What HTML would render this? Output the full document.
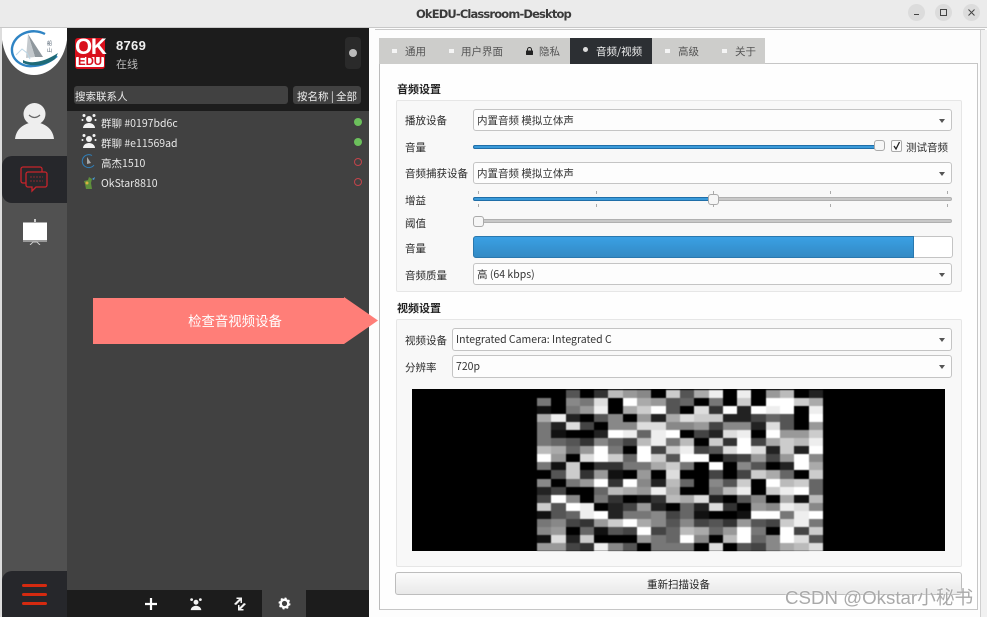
<!DOCTYPE html>
<html lang="zh"><head><meta charset="utf-8"><title>OkEDU-Classroom-Desktop</title>
<style>
html,body{margin:0;padding:0;width:987px;height:617px;overflow:hidden;background:#fff}
body{position:relative;font-family:"Liberation Sans","Noto Sans CJK SC",sans-serif;font-size:10.5px;color:#222}
.a,.t{position:absolute}
.t{white-space:nowrap;line-height:16px;margin-top:1px;font-family:"Noto Sans CJK SC","Liberation Sans",sans-serif}
.l{font-size:10.5px;color:#2a2a2a}
.c{position:absolute;box-sizing:border-box;background:#fdfdfd;border:1px solid #c4c4c4;border-radius:3px;font:10.5px/22px "Noto Sans CJK SC",sans-serif;padding-left:3px;color:#333;white-space:nowrap}
.c:after{content:"";position:absolute;right:6px;top:9px;border:3.5px solid transparent;border-top:4px solid #555;border-bottom:0}
.gb{position:absolute;box-sizing:border-box;background:#f8f8f8;border:1px solid #e6e6e6;border-radius:2px}
.h{font-weight:bold;font-size:11px;color:#222;margin-top:0}
.tr{position:absolute;height:4px;border-radius:2px;background:#c8c8c8;border:1px solid #b0b0b0;box-sizing:border-box}
.tb{position:absolute;height:4px;border-radius:2px 0 0 2px;background:#3a9ad9;border:1px solid #1f6ea8;box-sizing:border-box}
.hd{position:absolute;width:11px;height:11px;box-sizing:border-box;background:#f6f6f6;border:1px solid #aaa;border-radius:3px}
.tick{position:absolute;width:1px;height:3px;background:#aaa}
.tab{position:absolute;top:38px;height:25px;line-height:28px;font-family:"Noto Sans CJK SC",sans-serif;font-size:10.5px;color:#555;white-space:nowrap}
.sq{position:absolute;top:11px;width:5px;height:4px;background:#f5f5f5}
.li{color:#e8e8e8;font-size:10.5px}
.dot{position:absolute;left:354px;width:8px;height:8px;border-radius:50%;box-sizing:border-box}
.wb{position:absolute;top:4px;width:17px;height:17px;border-radius:50%;background:#dcdcdc}
table{position:absolute;left:537px;top:390px;width:286px;height:161px;border-collapse:collapse;table-layout:fixed;filter:blur(.6px)}
td{padding:0;height:8.05px}
.z0{background:#000}.z1{background:#111}.z2{background:#222}.z3{background:#333}.z4{background:#444}.z5{background:#555}.z6{background:#666}.z7{background:#777}.z8{background:#888}.z9{background:#999}.za{background:#aaa}.zb{background:#bbb}.zc{background:#ccc}.zd{background:#ddd}.ze{background:#eee}.zf{background:#fff}
</style></head><body>

<!-- title bar -->
<div class="a" style="left:0;top:0;width:987px;height:28px;background:#ebebeb;border-bottom:1px solid #c8c8c8;box-sizing:border-box"></div>
<div class="a" style="left:416px;top:6px;font:bold 11.5px/16px 'DejaVu Sans','Liberation Sans',sans-serif;color:#3a3a3a;white-space:nowrap;letter-spacing:-.85px">OkEDU-Classroom-Desktop</div>
<div class="wb" style="left:908px"></div><div class="wb" style="left:935px"></div><div class="wb" style="left:963px"></div>
<div class="a" style="left:914px;top:14px;width:5px;height:1px;background:#444"></div>
<div class="a" style="left:940px;top:9px;width:7px;height:7px;box-sizing:border-box;border:1px solid #444"></div>
<svg class="a" style="left:967px;top:8px" width="9" height="9"><path d="M1.5 1.5l6 6M7.5 1.5l-6 6" stroke="#444" stroke-width="1"/></svg>

<!-- left rail -->
<div class="a" style="left:0;top:28px;width:2px;height:589px;background:#ddd"></div>
<div class="a" style="left:2px;top:28px;width:65px;height:589px;background:#515151"></div>
<svg class="a" style="left:2px;top:28px" width="65" height="48" viewBox="0 0 65 48">
<path d="M0 0H65V12C62 33 48 47 32 47C16 47 3 33 0 12Z" fill="#fff"/>
<path d="M43 6C30 -1 12 6 10 20C9 32 20 39 30 38C40 38 48 34 55 28" fill="none" stroke="#2f84c4" stroke-width="2.4"/>
<path d="M26 6L41 29L33 29Z" fill="#8f979d"/>
<path d="M26 6L33 29L24 30Z" fill="#c4c9cd"/>
<path d="M14 27l6-6 5 4 3 6" fill="none" stroke="#bcd6e6" stroke-width="1"/>
<path d="M21 32C30 37 44 33 56 25L53 31C44 38 30 39 21 35Z" fill="#1f6b78"/>
<text x="45" y="17" font-size="5" fill="#456" font-family="Noto Sans CJK SC">船</text><text x="45" y="24" font-size="5" fill="#456" font-family="Noto Sans CJK SC">山</text>
</svg>
<svg class="a" style="left:14px;top:100px" width="42" height="40" viewBox="0 0 42 40">
<circle cx="20.500" cy="14" r="11" fill="#eee"/>
<path d="M1 39C2 30 8 25 15 23H26C33 25 39 30 40 39Z" fill="#eee"/>
<path d="M15 15q5.500 5 11 0" fill="none" stroke="#666" stroke-width="1.200"/>
</svg>
<div class="a" style="left:2px;top:156px;width:65px;height:47px;background:#26272b;border-radius:10px 0 0 10px"></div>
<svg class="a" style="left:19px;top:164px" width="30" height="30" viewBox="0 0 30 30" fill="none" stroke="#c8242b" stroke-width="1.300">
<path d="M7 19H4a2 2 0 0 1-2-2V5a2 2 0 0 1 2-2h17a2 2 0 0 1 2 2v3"/>
<path d="M9 8H26a2 2 0 0 1 2 2V21a2 2 0 0 1-2 2H17l-4 4v-4H9a2 2 0 0 1-2-2V10a2 2 0 0 1 2-2Z" fill="#26272b"/>
<path d="M11 13h13M11 17h13" stroke-dasharray="2 1" stroke-width="1" stroke="#8c2a2f"/>
</svg>
<div class="a" style="left:34px;top:219px;width:2px;height:3px;background:#ccc"></div>
<div class="a" style="left:23px;top:222px;width:24px;height:18px;background:#fff;box-sizing:border-box;border:1px solid #aaa;border-width:1px 0 0"></div>
<div class="a" style="left:23px;top:240px;width:24px;height:2px;background:#999"></div>
<svg class="a" style="left:29px;top:241px" width="12" height="4"><path d="M1 4l3-3h4l3 3" fill="none" stroke="#ccc"/></svg>
<div class="a" style="left:2px;top:571px;width:65px;height:46px;background:#26272b;border-radius:10px 0 0 0"></div>
<div class="a" style="left:22px;top:584px;width:25px;height:3px;border-radius:2px;background:#d42a10"></div>
<div class="a" style="left:22px;top:593px;width:25px;height:3px;border-radius:2px;background:#d42a10"></div>
<div class="a" style="left:22px;top:602px;width:25px;height:3px;border-radius:2px;background:#d42a10"></div>

<!-- contact panel -->
<div class="a" style="left:67px;top:28px;width:302px;height:83px;background:#1c1c1c"></div>
<div class="a" style="left:67px;top:111px;width:302px;height:479px;background:#414141"></div>
<div class="a" style="left:67px;top:590px;width:302px;height:27px;background:#1c1c1c"></div>
<div class="a" style="left:262px;top:590px;width:44px;height:27px;background:#414141"></div>
<div class="a" style="left:75px;top:38px;width:30px;height:31px;background:#d9101c;border-radius:3px"></div>
<div class="a" style="left:75px;top:35px;width:30px;text-align:center;font:bold 22px/24px 'Liberation Sans',sans-serif;color:#fff;letter-spacing:-1.2px">OK</div>
<div class="a" style="left:76px;top:57px;width:28px;height:10px;background:#fff;border-radius:1px"></div>
<div class="a" style="left:75px;top:56px;width:30px;text-align:center;font:bold 11.5px/12px 'Liberation Sans',sans-serif;color:#d9101c;letter-spacing:-.1px">EDU</div>
<div class="a" style="left:116px;top:38px;font:bold 13px/16px 'Liberation Sans',sans-serif;color:#f0f0f0;letter-spacing:.3px">8769</div>
<div class="t" style="left:116px;top:56px;margin-top:0;font-size:11px;color:#bbb">在线</div>
<div class="a" style="left:345px;top:37px;width:16px;height:32px;background:#2a2a2a;border-radius:4px"></div>
<div class="a" style="left:349px;top:49px;width:8px;height:8px;border-radius:50%;background:#bbb"></div>
<div class="a" style="left:74px;top:86px;width:214px;height:18px;background:#414141;border-radius:3px"></div>
<div class="t" style="left:75px;top:88px;font-size:10.5px;color:#eee">搜索联系人</div>
<div class="a" style="left:293px;top:86px;width:68px;height:18px;background:#414141;border-radius:3px"></div>
<div class="t" style="left:297px;top:88px;font-size:10.5px;color:#eee">按名称 | 全部</div>

<svg class="a" style="left:81px;top:113px" width="16" height="16" viewBox="0 0 16 16" fill="#f2f2f2"><circle cx="8" cy="6" r="3"/><circle cx="3" cy="2.500" r="1.500"/><circle cx="13" cy="2.500" r="1.500"/><circle cx="1.500" cy="7" r="1"/><circle cx="14.500" cy="7" r="1"/><path d="M2 15c0-3 3-5 6-5s6 2 6 5z"/></svg>
<div class="t li" style="left:101px;top:115px">群聊 #0197bd6c</div>
<div class="dot" style="top:118px;background:#6cc05c"></div>
<svg class="a" style="left:81px;top:133px" width="16" height="16" viewBox="0 0 16 16" fill="#f2f2f2"><circle cx="8" cy="6" r="3"/><circle cx="3" cy="2.500" r="1.500"/><circle cx="13" cy="2.500" r="1.500"/><circle cx="1.500" cy="7" r="1"/><circle cx="14.500" cy="7" r="1"/><path d="M2 15c0-3 3-5 6-5s6 2 6 5z"/></svg>
<div class="t li" style="left:101px;top:135px">群聊 #e11569ad</div>
<div class="dot" style="top:138px;background:#6cc05c"></div>
<svg class="a" style="left:81px;top:154px" width="15" height="15" viewBox="0 0 15 15"><path d="M11 1.500A6.500 6.500 0 1 0 13 11" fill="none" stroke="#2f7fba" stroke-width="1"/><path d="M6 3l4 6-4 1z" fill="#aaa"/></svg>
<div class="t li" style="left:101px;top:155px">高杰1510</div>
<div class="dot" style="top:158px;border:1px solid #c2434a"></div>
<svg class="a" style="left:82px;top:176px" width="14" height="14" viewBox="0 0 14 14"><path d="M2 5l4-1 1-3 3 2-1 4 1 6H4l-1-5z" fill="#5e8f3c"/><path d="M10 3l3-2-1 3z" fill="#4aa0d8"/><circle cx="5" cy="7" r="1.500" fill="#d8b040"/></svg>
<div class="t li" style="left:101px;top:175px">OkStar8810</div>
<div class="dot" style="top:178px;border:1px solid #c2434a"></div>

<svg class="a" style="left:144px;top:597px" width="14" height="14"><path d="M7 1v12M1 7h12" stroke="#fff" stroke-width="2.200"/></svg>
<svg class="a" style="left:189px;top:597px" width="14" height="14" viewBox="0 0 16 16" fill="#f2f2f2"><circle cx="8" cy="6" r="2.800"/><circle cx="3" cy="3" r="1.600"/><circle cx="13" cy="3" r="1.600"/><path d="M2 15c0-3 3-5 6-5s6 2 6 5z"/></svg>
<svg class="a" style="left:233px;top:597px" width="14" height="14" viewBox="0 0 14 14" fill="#f2f2f2"><path d="M1 7l5-5H3.500V0.500H9V6H7.500V3.500L3 8z"/><path d="M13 7l-5 5h2.500v1.500H5V8h1.500v2.500L11 6z"/></svg>
<svg class="a" style="left:278px;top:597px" width="13" height="13" viewBox="0 0 13 13"><circle cx="6.500" cy="6.500" r="3.800" fill="none" stroke="#fff" stroke-width="2.400"/><circle cx="6.500" cy="6.500" r="5.200" fill="none" stroke="#fff" stroke-width="1.600" stroke-dasharray="2 2.080"/></svg>

<!-- settings area -->
<div class="a" style="left:369px;top:28px;width:618px;height:589px;background:#fdfdfd"></div>
<div class="a" style="left:375px;top:29px;width:610px;height:1px;background:#c9c9c9"></div>
<div class="a" style="left:980px;top:30px;width:7px;height:587px;background:#f1f1f1;border-left:1px solid #d0d0d0;box-sizing:border-box"></div>
<div class="a" style="left:379px;top:63px;width:599px;height:547px;box-sizing:border-box;background:#fefefe;border:1px solid #c6c6c6;border-left-color:#bbb"></div>
<div class="a" style="left:379px;top:38px;width:386px;height:26px;background:#cdcdcb"></div>
<div class="a" style="left:570px;top:38px;width:82px;height:26px;background:#2c2f33"></div>
<div class="sq" style="left:392px;top:49px"></div><div class="tab" style="left:405px">通用</div>
<div class="sq" style="left:449px;top:49px"></div><div class="tab" style="left:461px">用户界面</div>
<svg class="a" style="left:526px;top:47px" width="7" height="8"><path d="M1.500 4V2.500a2 2 0 0 1 4 0V4" fill="none" stroke="#222"/><rect y="3.500" width="7" height="4.500" fill="#222" rx=".5"/></svg>
<div class="tab" style="left:539px">隐私</div>
<div class="a" style="left:583px;top:47px;width:5px;height:5px;border-radius:50%;background:#ddd"></div><div class="tab" style="left:596px;color:#f0f0f0">音频/视频</div>
<div class="sq" style="left:665px;top:49px"></div><div class="tab" style="left:678px">高级</div>
<div class="sq" style="left:722px;top:49px"></div><div class="tab" style="left:735px">关于</div>

<!-- audio group -->
<div class="t h" style="left:397px;top:81px">音频设置</div>
<div class="gb" style="left:396px;top:100px;width:566px;height:192px"></div>
<div class="t l" style="left:405px;top:112px">播放设备</div>
<div class="c" style="left:473px;top:109px;width:479px;height:22px">内置音频 模拟立体声</div>
<div class="t l" style="left:405px;top:139px">音量</div>
<div class="tr" style="left:473px;top:145px;width:408px"></div>
<div class="tb" style="left:473px;top:145px;width:404px"></div>
<div class="hd" style="left:874px;top:140px"></div>
<div class="a" style="left:891px;top:140px;width:11px;height:12px;box-sizing:border-box;background:#fcfcfc;border:1px solid #aaa;border-radius:2px"></div>
<svg class="a" style="left:892px;top:141px" width="10" height="10"><path d="M2 5l2 3 3.500-7" fill="none" stroke="#222" stroke-width="1.300"/></svg>
<div class="t l" style="left:906px;top:139px">测试音频</div>

<div class="t l" style="left:405px;top:165px">音频捕获设备</div>
<div class="c" style="left:473px;top:162px;width:479px;height:22px">内置音频 模拟立体声</div>
<div class="t l" style="left:405px;top:192px">增益</div>
<div class="tick" style="left:478px;top:191px"></div><div class="tick" style="left:596px;top:191px"></div><div class="tick" style="left:713px;top:191px"></div><div class="tick" style="left:830px;top:191px"></div><div class="tick" style="left:947px;top:191px"></div>
<div class="tick" style="left:478px;top:204px"></div><div class="tick" style="left:596px;top:204px"></div><div class="tick" style="left:713px;top:204px"></div><div class="tick" style="left:830px;top:204px"></div><div class="tick" style="left:947px;top:204px"></div>
<div class="tr" style="left:473px;top:197px;width:479px"></div>
<div class="tb" style="left:473px;top:197px;width:238px"></div>
<div class="hd" style="left:708px;top:194px"></div>
<div class="t l" style="left:405px;top:215px">阈值</div>
<div class="tr" style="left:473px;top:219px;width:479px"></div>
<div class="hd" style="left:473px;top:216px"></div>
<div class="t l" style="left:405px;top:240px">音量</div>
<div class="a" style="left:473px;top:236px;width:480px;height:22px;box-sizing:border-box;background:#fff;border:1px solid #c4c4c4;border-radius:3px"></div>
<div class="a" style="left:473px;top:236px;width:441px;height:22px;box-sizing:border-box;background:linear-gradient(#3aa0e4,#338ac4);border:1px solid #2a78ae;border-radius:3px 0 0 3px"></div>
<div class="t l" style="left:405px;top:267px">音频质量</div>
<div class="c" style="left:473px;top:263px;width:479px;height:22px">高 (64 kbps)</div>

<!-- video group -->
<div class="t h" style="left:397px;top:300px">视频设置</div>
<div class="gb" style="left:396px;top:319px;width:566px;height:248px"></div>
<div class="t l" style="left:405px;top:332px">视频设备</div>
<div class="c" style="left:452px;top:328px;width:500px;height:23px">Integrated Camera: Integrated C</div>
<div class="t l" style="left:405px;top:359px">分辨率</div>
<div class="c" style="left:452px;top:355px;width:500px;height:23px">720p</div>
<div class="a" style="left:412px;top:389px;width:533px;height:162px;background:#000"></div>
<table>
<tr><td class=z0><td class=z0><td class=z5><td class=z0><td class=z3><td class=zb><td class=z9><td class=z8><td class=z0><td class=zc><td class=z5><td class=za><td class=ze><td class=z0><td class=ze><td class=z0><td class=z9><td class=zb><td class=z0><td class=z2>
<tr><td class=z7><td class=z0><td class=z8><td class=z7><td class=zd><td class=z0><td class=zf><td class=za><td class=z9><td class=z5><td class=z6><td class=z0><td class=z7><td class=z0><td class=zc><td class=z0><td class=zf><td class=zf><td class=zc><td class=za>
<tr><td class=z1><td class=z0><td class=z7><td class=z9><td class=ze><td class=z0><td class=za><td class=zc><td class=zf><td class=z5><td class=z0><td class=zd><td class=z3><td class=zf><td class=z2><td class=zf><td class=ze><td class=zf><td class=z0><td class=ze>
<tr><td class=za><td class=ze><td class=z2><td class=z0><td class=z5><td class=z8><td class=z0><td class=z9><td class=z2><td class=za><td class=zd><td class=zc><td class=zc><td class=z2><td class=z2><td class=z4><td class=z6><td class=z5><td class=z0><td class=zf>
<tr><td class=z7><td class=z2><td class=zd><td class=z4><td class=z0><td class=z8><td class=z8><td class=zd><td class=zd><td class=z8><td class=z8><td class=z9><td class=z4><td class=z8><td class=z8><td class=z2><td class=zd><td class=z5><td class=z0><td class=z9>
<tr><td class=z7><td class=z1><td class=z0><td class=z0><td class=z2><td class=zf><td class=ze><td class=z6><td class=ze><td class=zf><td class=z0><td class=z4><td class=z2><td class=zd><td class=ze><td class=z0><td class=zf><td class=z9><td class=z9><td class=zc>
<tr><td class=z7><td class=z6><td class=z5><td class=z3><td class=z8><td class=z6><td class=z4><td class=zb><td class=ze><td class=z7><td class=zb><td class=z0><td class=zc><td class=z3><td class=zf><td class=z4><td class=za><td class=zc><td class=zb><td class=ze>
<tr><td class=zb><td class=za><td class=z6><td class=z9><td class=zf><td class=z7><td class=z0><td class=zf><td class=z4><td class=zc><td class=ze><td class=z4><td class=z5><td class=zd><td class=zf><td class=zd><td class=z2><td class=zc><td class=z2><td class=zf>
<tr><td class=zf><td class=z9><td class=z0><td class=zd><td class=zf><td class=zc><td class=z6><td class=zf><td class=zc><td class=z5><td class=zf><td class=zf><td class=z0><td class=z3><td class=z4><td class=z9><td class=z4><td class=z9><td class=zf><td class=z8>
<tr><td class=z7><td class=z1><td class=zc><td class=z0><td class=z3><td class=z3><td class=z7><td class=z7><td class=za><td class=zc><td class=z7><td class=z0><td class=zf><td class=z0><td class=z8><td class=z5><td class=z0><td class=z2><td class=zf><td class=za>
<tr><td class=z0><td class=z5><td class=zc><td class=z3><td class=z9><td class=z1><td class=z0><td class=z9><td class=z0><td class=zd><td class=z0><td class=z0><td class=z4><td class=z0><td class=z4><td class=zc><td class=za><td class=z6><td class=z0><td class=zc>
<tr><td class=z8><td class=z0><td class=z7><td class=z9><td class=zf><td class=z3><td class=zf><td class=z8><td class=z2><td class=zb><td class=z6><td class=z0><td class=z8><td class=z5><td class=zc><td class=z0><td class=zf><td class=zb><td class=zc><td class=z6>
<tr><td class=z2><td class=z4><td class=z0><td class=z0><td class=z6><td class=zb><td class=za><td class=z9><td class=ze><td class=za><td class=z0><td class=z0><td class=z7><td class=zb><td class=ze><td class=z0><td class=zc><td class=ze><td class=zf><td class=z6>
<tr><td class=z4><td class=zf><td class=z8><td class=z0><td class=z7><td class=z3><td class=z0><td class=z1><td class=z3><td class=zb><td class=za><td class=zd><td class=z2><td class=z0><td class=z5><td class=z8><td class=z0><td class=za><td class=z1><td class=zb>
<tr><td class=zc><td class=z5><td class=zf><td class=ze><td class=z0><td class=z2><td class=z4><td class=z9><td class=z2><td class=z0><td class=z6><td class=z2><td class=zd><td class=z3><td class=z0><td class=z9><td class=z8><td class=ze><td class=zd><td class=z8>
<tr><td class=z1><td class=z5><td class=z6><td class=ze><td class=zf><td class=z2><td class=z7><td class=z7><td class=z8><td class=z4><td class=z6><td class=z1><td class=z0><td class=z0><td class=z1><td class=zf><td class=zf><td class=z7><td class=ze><td class=zf>
<tr><td class=z7><td class=z8><td class=z4><td class=z3><td class=z9><td class=zc><td class=zf><td class=za><td class=z8><td class=z5><td class=z8><td class=z4><td class=z5><td class=z3><td class=z9><td class=z5><td class=z4><td class=zc><td class=ze><td class=z7>
<tr><td class=z8><td class=z9><td class=z0><td class=z6><td class=z1><td class=z5><td class=z4><td class=zf><td class=z4><td class=z6><td class=zb><td class=za><td class=z6><td class=z9><td class=zf><td class=z7><td class=z0><td class=zf><td class=z4><td class=zc>
<tr><td class=z1><td class=zd><td class=z2><td class=zc><td class=z0><td class=z0><td class=z0><td class=z9><td class=z7><td class=z6><td class=zf><td class=z8><td class=z0><td class=zb><td class=zf><td class=z6><td class=z8><td class=zf><td class=zd><td class=z5>
<tr><td class=z9><td class=z9><td class=z4><td class=z3><td class=ze><td class=z8><td class=z5><td class=z0><td class=z7><td class=z7><td class=z7><td class=z0><td class=zd><td class=z0><td class=z5><td class=z4><td class=z8><td class=za><td class=zb><td class=zd>
</table>
<div class="a" style="left:395px;top:572px;width:567px;height:23px;box-sizing:border-box;background:linear-gradient(#fbfbfb,#e9e9e9);border:1px solid #bdbdbd;border-radius:3px"></div>
<div class="t" style="left:395px;top:576px;width:567px;text-align:center;font-size:10.5px;color:#222">重新扫描设备</div>

<!-- arrow annotation -->
<svg class="a" style="left:93px;top:297px" width="286" height="48"><path d="M0 1H251V0L285 23.500L251 47V47H0Z" fill="#ff7e78"/></svg>
<div class="t" style="left:93px;top:311px;margin-top:0;width:284px;text-align:center;font-size:13.4px;line-height:18px;color:#fff">检查音视频设备</div>

<!-- watermark -->
<div class="a" style="left:785px;top:587px;font:18.7px/22px 'Liberation Sans','Noto Sans CJK SC',sans-serif;color:#a9a9a9;white-space:nowrap;text-shadow:0 0 2px #fff">CSDN @Okstar小秘书</div>
</body></html>
